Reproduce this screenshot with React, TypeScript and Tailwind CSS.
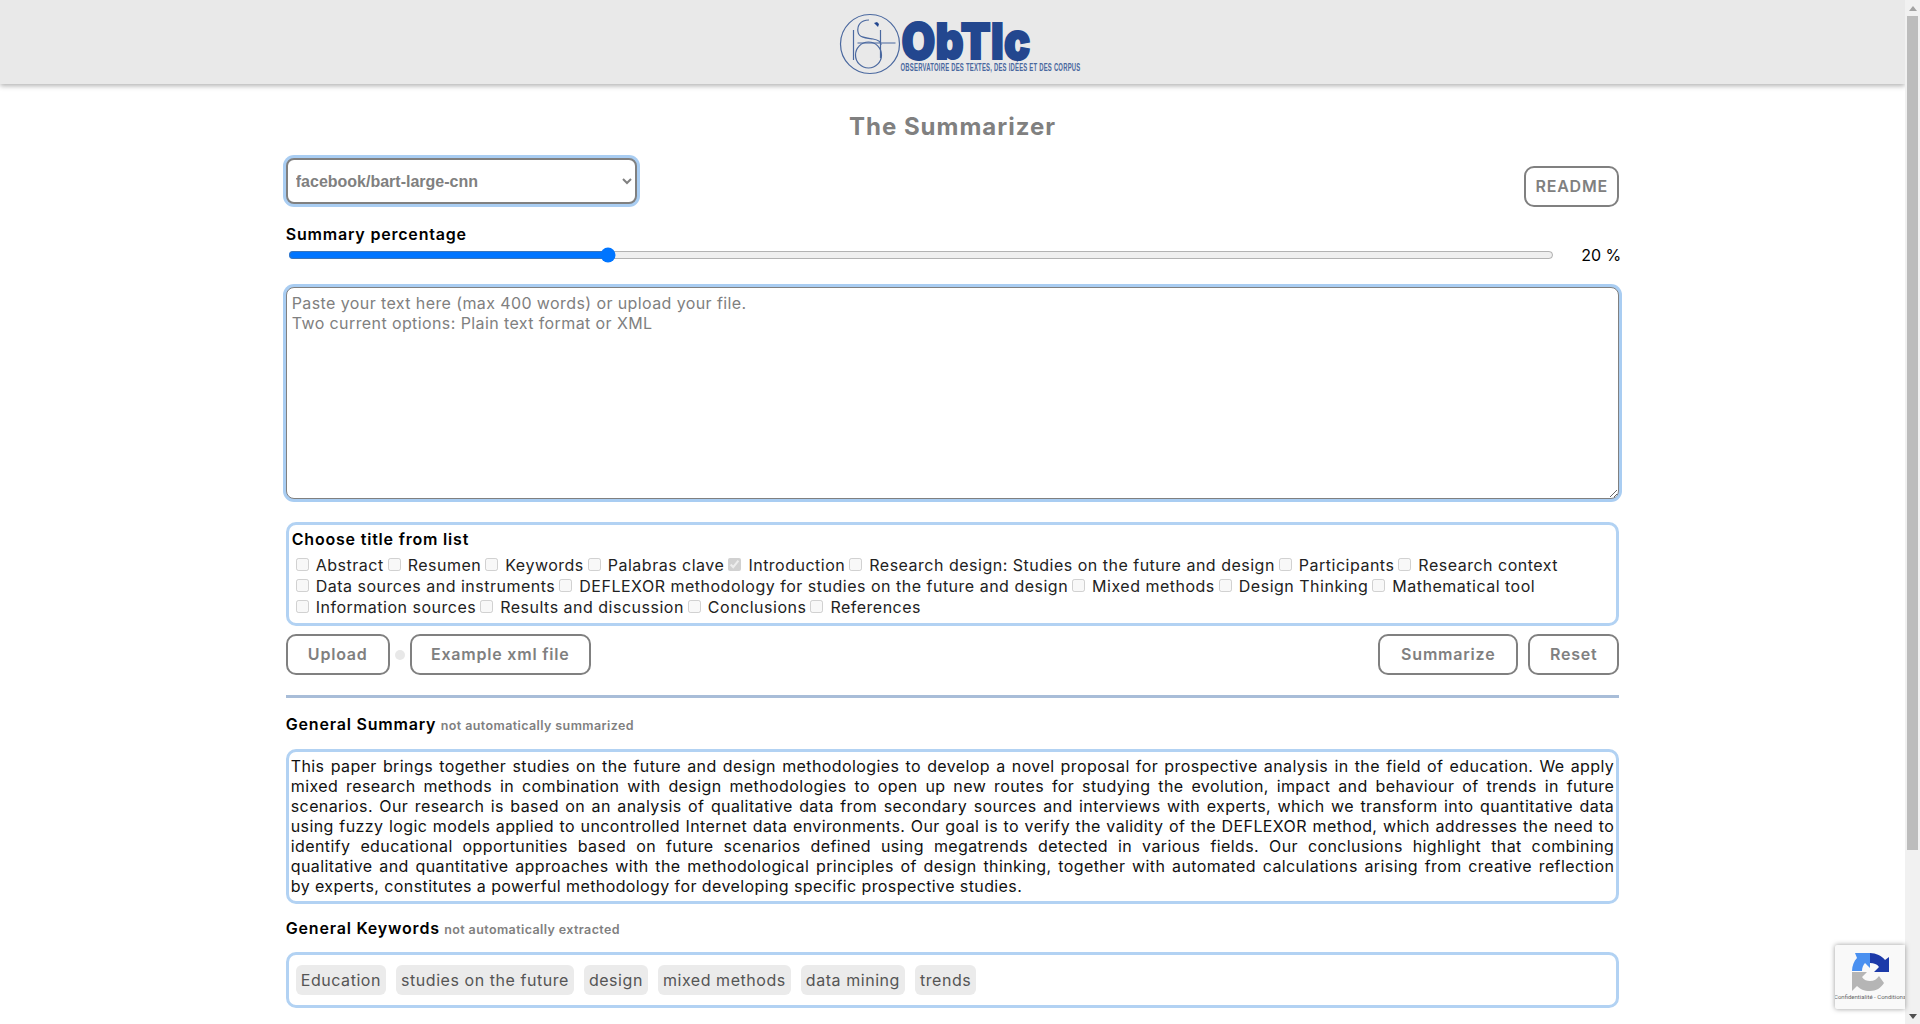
const titleRows = [
  ['Abstract', 'Resumen', 'Keywords', 'Palabras clave', 'Introduction', 'Research design: Studies on the future and design', 'Participants', 'Research context'],
  ['Data sources and instruments', 'DEFLEXOR methodology for studies on the future and design', 'Mixed methods', 'Design Thinking', 'Mathematical tool'],
  ['Information sources', 'Results and discussion', 'Conclusions', 'References'],
];

const summaryLines = [
  'This paper brings together studies on the future and design methodologies to develop a novel proposal for prospective analysis in the field of education. We apply',
  'mixed research methods in combination with design methodologies to open up new routes for studying the evolution, impact and behaviour of trends in future',
  'scenarios. Our research is based on an analysis of qualitative data from secondary sources and interviews with experts, which we transform into quantitative data',
  'using fuzzy logic models applied to uncontrolled Internet data environments. Our goal is to verify the validity of the DEFLEXOR method, which addresses the need to',
  'identify educational opportunities based on future scenarios defined using megatrends detected in various fields. Our conclusions highlight that combining',
  'qualitative and quantitative approaches with the methodological principles of design thinking, together with automated calculations arising from creative reflection',
  'by experts, constitutes a powerful methodology for developing specific prospective studies.',
];

const keywords = ['Education', 'studies on the future', 'design', 'mixed methods', 'data mining', 'trends'];

function Logo() {
  return (
    <svg width="244" height="66" viewBox="0 0 244 66" className="block overflow-visible">
      <g fill="none" stroke="#4a689f" strokeWidth="1.2">
        <circle cx="31" cy="32" r="29.5" />
        <path d="M14.5 18v30" />
        <path d="M30 8C21 8 18 14 19 20c1 6 9 6 15 7s8 3 8 6" />
        <path d="M41.5 18v28" />
        <path d="M18.5 31h38" />
        <circle cx="29.5" cy="43" r="13" />
      </g>
      <path d="M35 11l3-1 2 2-1 3-2-2z" fill="#23478f" />
      <text x="62.5" y="47" fontFamily="Inter, sans-serif" fontWeight="900" fontSize="50" fill="#23478f" stroke="#23478f" strokeWidth="2" textLength="129" lengthAdjust="spacingAndGlyphs">ObTIc</text>
      <text x="61.5" y="59" fontFamily="'Liberation Sans', sans-serif" fontWeight="700" fontSize="10.5" fill="#4a689f" textLength="180" lengthAdjust="spacingAndGlyphs">OBSERVATOIRE DES TEXTES, DES IDÉES ET DES CORPUS</text>
    </svg>
  );
}

function RecaptchaBadge() {
  return (
    <div className="absolute right-0 bottom-[15px] flex h-[64px] w-[70px] flex-col items-center overflow-hidden rounded-l-[2px] bg-[#f9f9f9] pt-[8px] shadow-[0_0_5px_rgba(128,128,128,0.8)]">
      <svg width="37" height="38" viewBox="0 0 37 38" className="shrink-0">
        <path d="M0 18C0 13 2 8 5 5L3 0H18V15L13 10C11 12 10 15 10 18Z" fill="#4a90f0" />
        <path d="M18 0C24 0 30 3 33 7L37 4V19H22L27 14C25 11 22 10 18 10Z" fill="#1c3aa9" />
        <path d="M0 19H15L10 24C12 27 15 28 18 28C22 28 25 26 27 23L32 30C29 35 24 38 18 38C12 38 8 36 5 33L0 38Z" fill="#b5b5b5" />
      </svg>
      <div className="mt-[3px] font-['Roboto',sans-serif] text-[6px] leading-none tracking-normal whitespace-nowrap text-[#666]">Confidentialité - Conditions</div>
    </div>
  );
}

function SectionLabel({ title, note }: { title: string; note: string }) {
  return (
    <div className="font-semibold text-black">
      <span className="text-[16px] tracking-[0.8px]">{title}</span>{' '}
      <span className="text-[12.5px] tracking-[0.4px] text-[#808080]">{note}</span>
    </div>
  );
}

function OutlineButton({ children, className }: { children: string; className?: string }) {
  return (
    <button className={`h-[41px] rounded-[10px] border-2 border-[#808080] bg-white pb-[1px] text-[16px] font-semibold tracking-[0.8px] text-[#808080] ${className ?? ''}`}>
      {children}
    </button>
  );
}

export default function App() {
  return (
    <div className="relative flex h-screen overflow-hidden bg-white font-['Inter',sans-serif] text-[16px] tracking-[0.4px] text-black">
      <main className="min-w-0 flex-1">
        <header className="flex h-[84px] items-center justify-center bg-[#e9e9e9] pt-[6px] pl-[16px] shadow-[0_2px_5px_rgba(0,0,0,0.3)]">
          <Logo />
        </header>

        <div className="mx-auto w-[70%]">
          <h1 className="mt-[27px] text-center text-[24px] leading-[32px] font-bold tracking-[1px] text-[#808080]">The Summarizer</h1>

          <div className="mt-[15px] flex items-start justify-between">
            <select className="h-[46px] w-[351px] rounded-[8px] border-2 border-[#808080] bg-white px-[4px] font-['Liberation_Sans',sans-serif] text-[16px] font-bold tracking-normal text-[#808080] shadow-[0_0_0_3px_#a9cdf2]">
              <option>facebook/bart-large-cnn</option>
            </select>
            <OutlineButton className="mt-[8px] w-[95px]">README</OutlineButton>
          </div>

          <div className="mt-[17px] text-[16px] leading-[20px] font-semibold tracking-[0.8px]">Summary percentage</div>
          <div className="mt-[1px] flex items-center">
            <input type="range" min={5} max={65} defaultValue={20} className="m-0 ml-[2px] h-[16px] flex-1" />
            <span className="ml-[27px] w-[38px] pr-[2px] text-right text-[16px] leading-[20px] tracking-normal whitespace-nowrap">20 %</span>
          </div>

          <textarea
            className="mt-[22px] block h-[212px] w-full rounded-[8px] border border-[#808080] bg-white px-[5px] py-[5px] text-[16px] leading-[20px] shadow-[0_0_0_3px_#a9cdf2] outline-none placeholder:text-[#808080]"
            placeholder={'Paste your text here (max 400 words) or upload your file.\nTwo current options: Plain text format or XML'}
          />

          <div className="mt-[23px] h-[104px] rounded-[10px] border-[3px] border-[#b2d2f3] px-[3px] pt-[4px]">
            <div className="text-[16px] leading-[21px] font-semibold tracking-[0.8px]">Choose title from list</div>
            <div className="mt-[4px]">
              {titleRows.map((row) => (
                <div key={row[0]} className="flex h-[21px] items-center whitespace-nowrap">
                  {row.map((label) => (
                    <label key={label} className="flex items-center">
                      <input type="checkbox" disabled defaultChecked={label === 'Introduction'} className="mt-0 mr-[3px] mb-0 ml-[4px] h-[13px] w-[13px]" />
                      <span className="ml-[4px] text-[16px] leading-[20px] tracking-[0.5px] text-[#222]">{label}</span>
                    </label>
                  ))}
                </div>
              ))}
            </div>
          </div>

          <div className="mt-[8px] flex items-center">
            <OutlineButton className="w-[104px]">Upload</OutlineButton>
            <div className="mx-[5px] h-[10px] w-[10px] rounded-full bg-[#e8e8e8]" />
            <OutlineButton className="w-[181px]">Example xml file</OutlineButton>
            <OutlineButton className="ml-auto w-[140px]">Summarize</OutlineButton>
            <OutlineButton className="ml-[10px] w-[91px]">Reset</OutlineButton>
          </div>

          <div className="mt-[20px] h-[3px] bg-[#a8bdd8]" />

          <div className="mt-[14px]">
            <SectionLabel title="General Summary" note="not automatically summarized" />
          </div>
          <div className="mt-[13px] rounded-[10px] border-[3px] border-[#b2d2f3] px-[2px] pt-[4px] pb-[5px]">
            {summaryLines.map((line, i) => (
              <div key={i} className={`text-[16px] leading-[20px] text-[#111] ${i < summaryLines.length - 1 ? '[text-align-last:justify]' : ''}`}>
                {line}
              </div>
            ))}
          </div>

          <div className="mt-[12px]">
            <SectionLabel title="General Keywords" note="not automatically extracted" />
          </div>
          <div className="mt-[12px] flex h-[56px] items-center gap-[10px] rounded-[10px] border-[3px] border-[#b2d2f3] px-[7px]">
            {keywords.map((kw) => (
              <span key={kw} className="rounded-[6px] bg-[#ebebeb] px-[5px] py-[5px] text-[16px] leading-[20px] tracking-[0.55px] text-[#555]">{kw}</span>
            ))}
          </div>
        </div>
      </main>

      <aside className="flex w-[15px] shrink-0 flex-col bg-[#f1f1f1]">
        <div className="flex h-[16px] items-center justify-center">
          <div className="h-0 w-0 border-x-[4px] border-b-[5px] border-x-transparent border-b-[#a3a3a3]" />
        </div>
        <div className="mx-[2px] h-[834px] bg-[#bcbcbc]" />
        <div className="mt-auto flex h-[16px] items-center justify-center">
          <div className="h-0 w-0 border-x-[4px] border-t-[5px] border-x-transparent border-t-[#505050]" />
        </div>
      </aside>

      <div className="pointer-events-none absolute right-[15px] bottom-0 h-full w-[70px]">
        <RecaptchaBadge />
      </div>
    </div>
  );
}
